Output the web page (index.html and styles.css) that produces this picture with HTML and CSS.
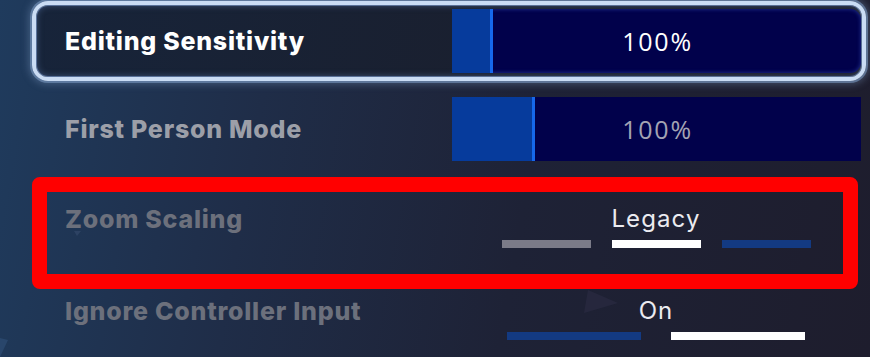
FILE: index.html
```html
<!DOCTYPE html>
<html>
<head>
<meta charset="utf-8">
<link rel="stylesheet" href="styles.css">
</head>
<body>
<div class="screen">
  <svg class="deco" width="870" height="357" viewBox="0 0 870 357">
    <polygon points="588,290 618,303 584,313" fill="#282940" opacity="0.8"/>
    <polygon points="0,338 8,340 0,357" fill="#2c4a70" opacity="0.8"/>
    <polygon points="74,231 81,231 77,236" fill="#33496a" opacity="0.7"/>
  </svg>
  <div class="list">
    <div class="row row-slider row-active">
      <div class="label label-active">Editing Sensitivity</div>
      <div class="control">
        <div class="bar bar-round">
          <div class="fill" style="width:41px"></div>
          <span class="value value-active">100%</span>
        </div>
      </div>
    </div>
    <div class="row row-slider">
      <div class="label label-dim">First Person Mode</div>
      <div class="control">
        <div class="bar">
          <div class="fill" style="width:83px"></div>
          <span class="value value-dim">100%</span>
        </div>
      </div>
    </div>
    <div class="row row-select">
      <div class="label label-off">Zoom Scaling</div>
      <div class="control control-select">
        <div class="option">Legacy</div>
        <div class="segs segs-three">
          <span class="seg seg-grey"></span>
          <span class="seg seg-white"></span>
          <span class="seg seg-blue"></span>
        </div>
      </div>
      <div class="highlight"></div>
    </div>
    <div class="row row-select">
      <div class="label label-off">Ignore Controller Input</div>
      <div class="control control-select">
        <div class="option">On</div>
        <div class="segs segs-two">
          <span class="seg seg-blue"></span>
          <span class="seg seg-white"></span>
        </div>
      </div>
    </div>
  </div>
</div>
</body>
</html>
```
FILE: styles.css
```css
html, body {
  margin: 0;
  padding: 0;
  width: 870px;
  height: 357px;
  overflow: hidden;
}
.screen {
  position: relative;
  width: 870px;
  height: 357px;
  background: linear-gradient(100deg, #1f3b5d 0%, #1f2d48 30%, #1e2236 60%, #1e1d2d 100%);
  font-family: Inter, "Noto Sans", sans-serif;
  overflow: hidden;
}
.deco {
  position: absolute;
  left: 0;
  top: 0;
}
.list {
  position: relative;
  display: flex;
  flex-direction: column;
  gap: 8px;
  padding: 1px 0 0 32px;
}
.row {
  position: relative;
  box-sizing: border-box;
  width: 834px;
  display: flex;
  border: 4px solid transparent;
  padding: 4px 1px 4px 29px;
}
.row-slider {
  height: 80px;
  align-items: center;
}
.row-active {
  border-color: #cadcf4;
  border-radius: 16px;
  background: linear-gradient(100deg, #17243a 0%, #1a1f2e 60%, #1b1c29 100%);
  box-shadow: 0 0 0 2px rgba(120, 150, 190, 0.6), 0 0 7px 4px rgba(120, 150, 190, 0.35), inset 0 0 0 1px rgba(130, 160, 210, 0.55), inset 0 0 7px rgba(90, 120, 170, 0.65);
}
.row-select {
  height: 84px;
  align-items: flex-start;
  padding-top: 23px;
}
.label {
  width: 387px;
  flex: none;
  font-family: Inter, "Noto Sans", sans-serif;
  font-size: 25px;
  font-weight: 800;
  letter-spacing: 0.75px;
  line-height: 30px;
}
.label-active { color: #ffffff; }
.label-dim { color: #9c9fa8; }
.label-off { color: #6c707c; }
.control {
  flex: 1;
  align-self: stretch;
  display: flex;
}
.bar {
  position: relative;
  flex: 1;
  background: #01014b;
  display: flex;
  align-items: center;
  justify-content: center;
  overflow: hidden;
}
.bar-round {
  border-radius: 0 11px 11px 0;
  box-shadow: inset 0 0 4px rgba(60, 90, 200, 0.6);
}
.fill {
  position: absolute;
  left: 0;
  top: 0;
  bottom: 0;
  background: #063b9c;
  border-right: 3px solid #1668ec;
  box-sizing: border-box;
}
.value {
  position: relative;
  font-family: "Open Sans", Roboto, sans-serif;
  font-size: 25px;
  font-weight: 400;
  letter-spacing: 1.8px;
  margin-left: 2px;
}
.value-active { color: #ffffff; }
.value-dim { color: #a3a3b3; }
.control-select {
  flex-direction: column;
  align-items: center;
  padding-right: 1px;
}
.option {
  font-family: Inter, "Noto Sans", sans-serif;
  font-size: 24px;
  line-height: 30px;
  letter-spacing: 1.1px;
  color: #ebebf0;
}
.segs {
  display: flex;
  margin-top: 6px;
}
.segs-three { gap: 21px; }
.segs-two { gap: 30px; }
.seg {
  display: block;
  height: 8px;
}
.segs-three .seg { width: 89px; }
.segs-two .seg { width: 134px; }
.seg-grey { background: #7b7b88; }
.seg-white { background: #ffffff; }
.seg-blue { background: #133a82; }
.highlight {
  position: absolute;
  left: -4px;
  top: -4px;
  width: 826px;
  height: 112px;
  box-sizing: border-box;
  border: 15px solid #ff0000;
  border-radius: 8px;
}
```
